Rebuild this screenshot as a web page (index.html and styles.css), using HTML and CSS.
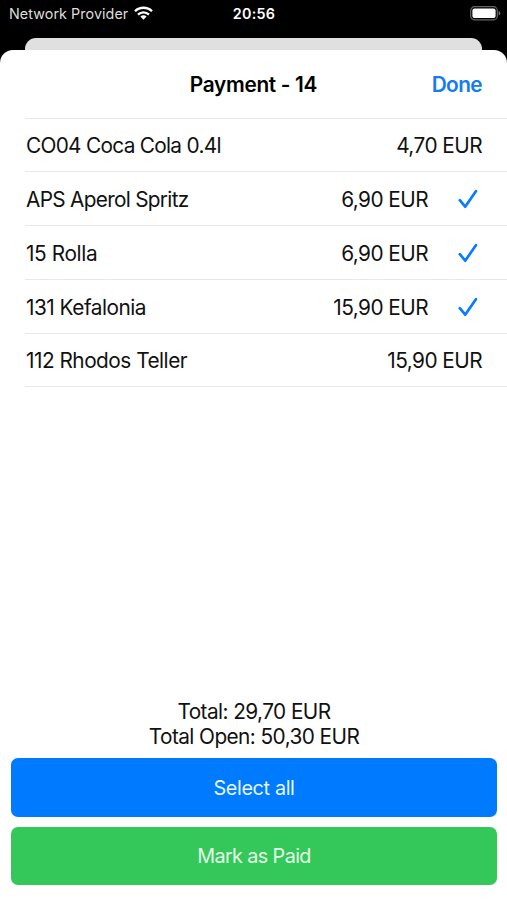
FILE: index.html
```
<!DOCTYPE html>
<html lang="en">
<head>
<meta charset="utf-8">
<title>Payment - 14</title>
<link rel="stylesheet" href="styles.css">
</head>
<body>
<div class="screen">
  <header class="status">
    <div class="carrier"><span>Network Provider</span>
      <svg class="wifi" viewBox="0 0 19 14"><g fill="none" stroke="#fff" stroke-width="2.3"><path d="M1 5.2a12.2 12.2 0 0 1 17 0"/><path d="M4 8.6a7.8 7.8 0 0 1 11 0"/></g><path d="M6.4 10.5a4.4 4.4 0 0 1 6.2 0L9.5 13.7Z" fill="#fff"/></svg>
    </div>
    <time>20:56</time>
    <svg class="battery" viewBox="0 0 31 15"><rect x=".7" y=".7" width="26.6" height="13.1" rx="3.8" fill="none" stroke="#666" stroke-width="1.2"/><rect x="2.4" y="2.4" width="23.2" height="9.7" rx="2" fill="#fff"/><path d="M28.7 5v4.5q1.6-.6 1.6-2.25T28.7 5Z" fill="#777"/></svg>
  </header>
  <div class="behind"></div>
  <main class="sheet">
    <div class="nav"><h1>Payment - 14</h1><span class="done">Done</span></div>
    <ul class="items">
      <li><span class="name tight">CO04 Coca Cola 0.4l</span><span class="price">4,70 EUR</span></li>
      <li><span class="name tight">APS Aperol Spritz</span><span class="price">6,90 EUR</span><svg class="check" viewBox="0 0 20 20"><path d="M1.8 11.2 7.2 17.7 17.9 2.2"/></svg></li>
      <li><span class="name loose">15 Rolla</span><span class="price">6,90 EUR</span><svg class="check" viewBox="0 0 20 20"><path d="M1.8 11.2 7.2 17.7 17.9 2.2"/></svg></li>
      <li><span class="name">131 Kefalonia</span><span class="price">15,90 EUR</span><svg class="check" viewBox="0 0 20 20"><path d="M1.8 11.2 7.2 17.7 17.9 2.2"/></svg></li>
      <li><span class="name">112 Rhodos Teller</span><span class="price">15,90 EUR</span></li>
    </ul>
    <footer class="footer">
      <p>Total: 29,70 EUR</p>
      <p>Total Open: 50,30 EUR</p>
      <button class="btn select">Select all</button>
      <button class="btn paid">Mark as Paid</button>
    </footer>
  </main>
</div>
</body>
</html>
```

FILE: styles.css
```
* { box-sizing: border-box; margin: 0; padding: 0; }
body { background: #000; font-family: Inter, "Liberation Sans", sans-serif; }
.screen { width: 507px; height: 900px; overflow: hidden; display: flex; flex-direction: column; background: #000; }
.status { height: 38px; flex: none; display: grid; grid-template-columns: 1fr auto 1fr; align-items: start; padding: 0 7px 0 9px; color: #fff; font-size: 14.3px; line-height: 28px; }
.carrier { display: flex; gap: 6px; color: #ddd; letter-spacing: .08px; }
.wifi { width: 19px; height: 14px; margin-top: 6px; }
.status time { font-weight: 600; letter-spacing: .3px; margin-left: -1px; }
.battery { width: 31px; height: 15px; justify-self: end; margin: 6px -1px 0 0; }
.behind { height: 24px; flex: none; margin: 0 25px; background: #e0e0e0; border-radius: 11px 11px 0 0; }
.sheet { flex: 1; min-height: 0; margin-top: -12px; background: #fff; border-radius: 13px 13px 0 0; display: flex; flex-direction: column; font-size: 20.8px; color: #111; }
.nav { height: 68px; flex: none; display: grid; grid-template-columns: 1fr auto 1fr; align-items: center; padding: 0 25px; color: #000; }
.nav h1 { grid-column: 2; font-size: 20.8px; font-weight: 600; letter-spacing: -.3px; }
.done { justify-self: end; font-weight: 600; letter-spacing: -.6px; color: #127bf5; }
.items { list-style: none; margin-left: 25px; border-top: 1px solid #e8e8e8; }
.items li { height: 53.7px; display: flex; align-items: center; padding: 1px 25px 0 1px; border-bottom: 1px solid #e8e8e8; }
.items li:first-child { height: 53px; }
.items li:nth-child(2), .items li:nth-child(3) { height: 54px; }
.items li:nth-child(4) { padding-top: 2px; }
.name { flex: 1; letter-spacing: -.5px; }
.tight { letter-spacing: -.7px; }
.loose { letter-spacing: -.38px; }
.price { letter-spacing: -.55px; }
.check { width: 20px; height: 20px; margin: 0 4px 0 30px; fill: none; stroke: #087cff; stroke-width: 2.7; stroke-linecap: round; stroke-linejoin: round; }
.footer { margin-top: auto; padding: 0 10px 15px 11px; text-align: center; }
.footer p { line-height: 24.5px; letter-spacing: -.57px; }
.btn { display: block; width: 100%; height: 58.4px; padding-top: 1px; border: 0; border-radius: 7px; color: #e6f6ff; font: 400 19.8px Inter, "Liberation Sans", sans-serif; letter-spacing: -.35px; }
.select { margin-top: 9px; background: #007aff; }
.paid { margin-top: 10px; background: #34c759; color: #e4fce8; letter-spacing: -.6px; }
```
